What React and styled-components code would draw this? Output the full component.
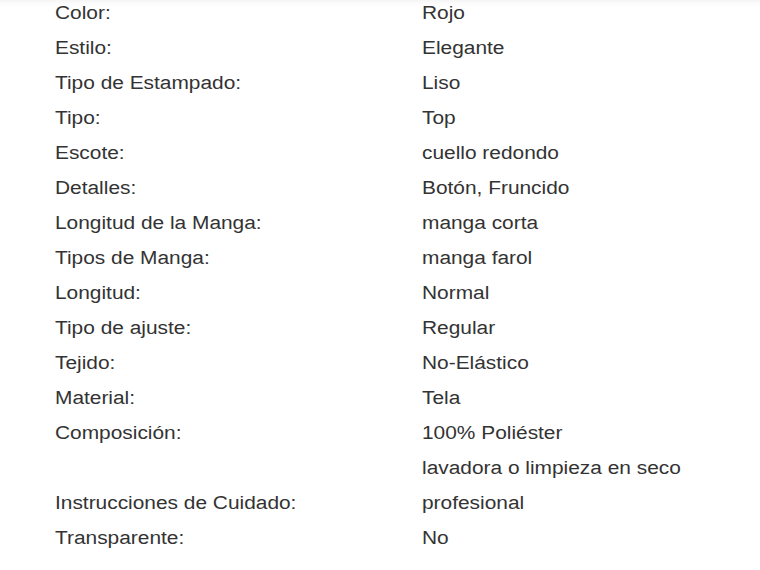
import styled, { createGlobalStyle } from "styled-components";

const GlobalStyle = createGlobalStyle`
    html, body {
        margin: 0;
        padding: 0;
        background: #ffffff;
    }
    body {
        font-family: "Liberation Sans", Arial, sans-serif;
    }
`;

const attributes = [
    ["Color:", "Rojo"],
    ["Estilo:", "Elegante"],
    ["Tipo de Estampado:", "Liso"],
    ["Tipo:", "Top"],
    ["Escote:", "cuello redondo"],
    ["Detalles:", "Botón, Fruncido"],
    ["Longitud de la Manga:", "manga corta"],
    ["Tipos de Manga:", "manga farol"],
    ["Longitud:", "Normal"],
    ["Tipo de ajuste:", "Regular"],
    ["Tejido:", "No-Elástico"],
    ["Material:", "Tela"],
    ["Composición:", "100% Poliéster"],
    ["Instrucciones de Cuidado:", "lavadora o limpieza en seco profesional"],
    ["Transparente:", "No"],
];

export default function App() {
    return (
        <Page>
            <GlobalStyle />
            <AttributeList>
                {attributes.map(([label, value]) => (
                    <Row key={label}>
                        <Cell>
                            <Text>{label}</Text>
                        </Cell>
                        <Cell>
                            <Text>{value}</Text>
                        </Cell>
                    </Row>
                ))}
            </AttributeList>
        </Page>
    );
}

const Page = styled.div`
    width: 760px;
    height: 570px;
    overflow: hidden;
    background: #ffffff;
    box-shadow: inset 0 8px 8px -8px rgba(0, 0, 0, 0.08);
`;

const AttributeList = styled.div`
    display: flex;
    flex-direction: column;
    padding-left: 55px;
    margin-top: -4px;
`;

const Row = styled.div`
    display: grid;
    grid-template-columns: 367px 260px;
    align-items: end;
`;

const Cell = styled.div`
    font-size: 18px;
    line-height: 35px;
    color: #333333;
`;

// the reference text is set noticeably wider than plain Arial
const Text = styled.span`
    display: inline-block;
    transform: scaleX(1.16);
    transform-origin: left center;
`;
